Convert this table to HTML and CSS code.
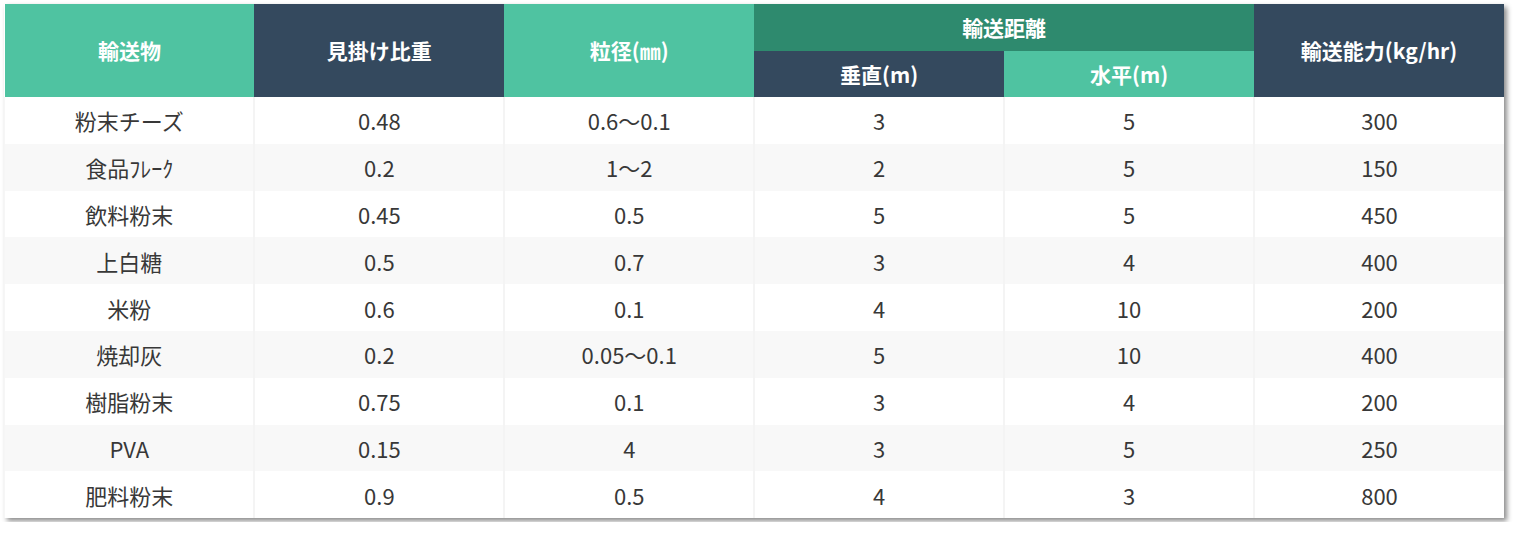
FILE: index.html
```html
<!DOCTYPE html>
<html lang="ja">
<head>
<meta charset="utf-8">
<link rel="stylesheet" href="styles.css">
</head>
<body>
<div class="wrap">
<table class="spec">
  <thead>
    <tr class="h1">
      <th rowspan="2" class="green">輸送物</th>
      <th rowspan="2" class="navy">見掛け比重</th>
      <th rowspan="2" class="green">粒径(㎜)</th>
      <th colspan="2" class="dgreen">輸送距離</th>
      <th rowspan="2" class="navy">輸送能力(kg/hr)</th>
    </tr>
    <tr class="h2">
      <th class="navy">垂直(m)</th>
      <th class="green">水平(m)</th>
    </tr>
  </thead>
  <tbody>
    <tr><td>粉末チーズ</td><td>0.48</td><td>0.6～0.1</td><td>3</td><td>5</td><td>300</td></tr>
    <tr><td>食品ﾌﾚｰｸ</td><td>0.2</td><td>1～2</td><td>2</td><td>5</td><td>150</td></tr>
    <tr><td>飲料粉末</td><td>0.45</td><td>0.5</td><td>5</td><td>5</td><td>450</td></tr>
    <tr><td>上白糖</td><td>0.5</td><td>0.7</td><td>3</td><td>4</td><td>400</td></tr>
    <tr><td>米粉</td><td>0.6</td><td>0.1</td><td>4</td><td>10</td><td>200</td></tr>
    <tr><td>焼却灰</td><td>0.2</td><td>0.05～0.1</td><td>5</td><td>10</td><td>400</td></tr>
    <tr><td>樹脂粉末</td><td>0.75</td><td>0.1</td><td>3</td><td>4</td><td>200</td></tr>
    <tr><td>PVA</td><td>0.15</td><td>4</td><td>3</td><td>5</td><td>250</td></tr>
    <tr><td>肥料粉末</td><td>0.9</td><td>0.5</td><td>4</td><td>3</td><td>800</td></tr>
  </tbody>
</table>
</div>
</body>
</html>
```

FILE: styles.css
```css
html, body {
  margin: 0;
  padding: 0;
  background: #ffffff;
}
.wrap {
  padding: 4px;
}
.spec {
  width: 1500px;
  border-collapse: collapse;
  table-layout: fixed;
  font-family: "Noto Sans CJK JP", "Noto Sans", sans-serif;
  box-shadow: 3px 3px 5px rgba(0, 0, 0, 0.45);
}
.spec th {
  color: #ffffff;
  font-weight: bold;
  font-size: 21px;
  padding: 0;
  text-align: center;
  vertical-align: middle;
  line-height: 1;
}
.spec .h1 th { height: 47px; }
.spec .h2 th { height: 46px; }
.green { background: #4fc3a1; }
.navy { background: #34495e; }
.dgreen { background: #2e8a6e; }
.spec td {
  height: 46.8px;
  padding: 0;
  text-align: center;
  vertical-align: middle;
  font-size: 22px;
  color: #383838;
  background: #ffffff;
  border-left: 2px solid #f4f4f4;
  line-height: 1;
}
.spec td:first-child { border-left: 1px solid #f6f6f6; }
.spec tbody tr:nth-child(even) td { background: #f8f8f8; }
```
